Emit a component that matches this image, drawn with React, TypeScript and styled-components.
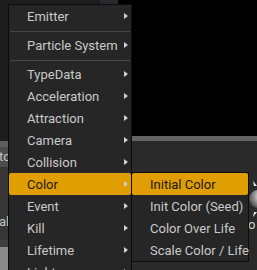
import * as React from "react";
import styled, { createGlobalStyle } from "styled-components";

const GlobalStyles = createGlobalStyle`
  html, body {
    margin: 0;
    padding: 0;
    background: #000;
  }
  * {
    box-sizing: border-box;
  }
`;

const Screen = styled.div`
  position: relative;
  width: 257px;
  height: 270px;
  overflow: hidden;
  display: flex;
  font-family: Roboto, "Liberation Sans", sans-serif;
  background: #000;
`;

const LeftStrip = styled.div`
  width: 8px;
  display: flex;
  flex-direction: column;
  overflow: hidden;
`;

const StripBlock = styled.div<{ $h: number; $bg: string; $textTop?: number }>`
  height: ${p => p.$h}px;
  flex: ${p => (p.$h === 0 ? 1 : "none")};
  background: ${p => p.$bg};
  color: #c4c4c4;
  font-size: 13px;
  line-height: 16px;
  padding-top: ${p => p.$textTop ?? 0}px;
  white-space: nowrap;
  overflow: hidden;
`;

const CutText = styled.span<{ $shift: number }>`
  display: inline-block;
  margin-left: ${p => p.$shift}px;
`;

const MiddleColumn = styled.div`
  width: 123px;
  display: flex;
  flex-direction: column;
  background: #1d1d1d;
`;

const TopTabs = styled.div`
  height: 5px;
  display: flex;
`;

const Tab = styled.div<{ $w: number; $bg: string }>`
  width: ${p => p.$w}px;
  flex: ${p => (p.$w === 0 ? 1 : "none")};
  background: ${p => p.$bg};
`;

const Viewport = styled.div`
  flex: 1;
  display: flex;
  flex-direction: column;
`;

const ViewportSky = styled.div`
  height: 136px;
  background: #000;
`;

const ViewportBar = styled.div`
  height: 5px;
  background: #646464;
`;

const ViewportBody = styled.div`
  flex: 1;
  background: #2a2a2a;
  display: flex;
  justify-content: flex-end;
  padding-top: 40px;
`;

const Gizmo = styled.div`
  width: 9px;
  display: flex;
  flex-direction: column;
  align-items: flex-start;
  gap: 1px;
  color: #d0d0d0;
  font-size: 13px;
  line-height: 14px;
`;

const Menu = styled.div<{ $left: number; $top: number; $w: number }>`
  position: absolute;
  left: ${p => p.$left}px;
  top: ${p => p.$top}px;
  width: ${p => p.$w}px;
  background: #262626;
  border: 1px solid #0c0c0c;
  display: flex;
  flex-direction: column;
`;

const Item = styled.div<{ $active?: boolean; $indent: number }>`
  height: 22px;
  display: flex;
  align-items: center;
  justify-content: space-between;
  padding-left: ${p => p.$indent}px;
  padding-right: 3px;
  border-radius: 2px;
  font-size: 13px;
  color: ${p => (p.$active ? "#1a1a1a" : "#cacaca")};
  background: ${p => (p.$active ? "#e19e00" : "transparent")};
  white-space: nowrap;
`;

const Arrow = styled.span`
  width: 0;
  height: 0;
  border-top: 3.5px solid transparent;
  border-bottom: 3.5px solid transparent;
  border-left: 4px solid #cfcfcf;
`;

const Separator = styled.div`
  height: 7px;
  padding: 4px 1px 2px;
  &::after {
    content: "";
    display: block;
    height: 1px;
    background: #474747;
  }
`;

const mainItems = [
  "TypeData",
  "Acceleration",
  "Attraction",
  "Camera",
  "Collision",
  "Color",
  "Event",
  "Kill",
  "Lifetime",
  "Light",
];

const colorItems = ["Initial Color", "Init Color (Seed)", "Color Over Life", "Scale Color / Life"];

export const App = () => {
  const [hovered] = React.useState("Color");
  const [picked] = React.useState("Initial Color");

  return (
    <Screen>
      <GlobalStyles />
      <LeftStrip>
        <StripBlock $h={141} $bg="#1d1d1d" />
        <StripBlock $h={6} $bg="#5e5e5e" />
        <StripBlock $h={20} $bg="#4c4c4c" $textTop={2}>
          <CutText $shift={-1}>tc</CutText>
        </StripBlock>
        <StripBlock $h={73} $bg="#363636" $textTop={47}>
          <CutText $shift={-1}>al</CutText>
        </StripBlock>
        <StripBlock $h={7} $bg="#3e3e3e" />
        <StripBlock $h={0} $bg="#8a8a8a" />
      </LeftStrip>
      <MiddleColumn>
        <TopTabs>
          <Tab $w={92} $bg="#1d1d1d" />
          <Tab $w={18} $bg="#29292c" />
          <Tab $w={0} $bg="#000" />
        </TopTabs>
      </MiddleColumn>
      <Viewport>
        <ViewportSky />
        <ViewportBar />
        <ViewportBody>
          <Gizmo>
            <svg width="9" height="36" viewBox="0 0 9 36">
              <defs>
                <radialGradient id="ball" cx="0.7" cy="0.35" r="0.8">
                  <stop offset="0" stopColor="#ffffff" />
                  <stop offset="0.5" stopColor="#9a9a9a" />
                  <stop offset="1" stopColor="#3a3a3a" />
                </radialGradient>
              </defs>
              <polygon points="5,0 9,5 6,5" fill="#e8e8e8" />
              <circle cx="10" cy="18" r="9" fill="url(#ball)" />
              <polygon points="5,36 9,31 6,31" fill="#e8e8e8" />
            </svg>
            <span>o</span>
          </Gizmo>
        </ViewportBody>
      </Viewport>

      <Menu $left={8} $top={4} $w={124}>
        <Item $indent={18}>
          Emitter
          <Arrow />
        </Item>
        <Separator />
        <Item $indent={18}>
          Particle System
          <Arrow />
        </Item>
        <Separator />
        {mainItems.map(name => (
          <Item key={name} $indent={18} $active={name === hovered}>
            {name}
            <Arrow />
          </Item>
        ))}
      </Menu>

      <Menu $left={131} $top={172} $w={118}>
        {colorItems.map(name => (
          <Item key={name} $indent={18} $active={name === picked}>
            {name}
          </Item>
        ))}
      </Menu>
    </Screen>
  );
};

export default App;
